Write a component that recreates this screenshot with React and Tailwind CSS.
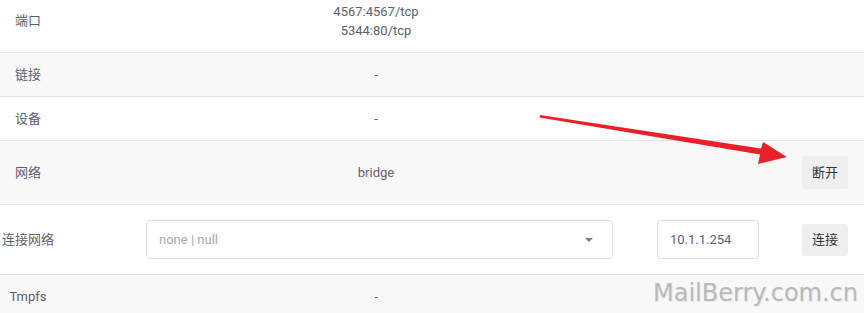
import React from 'react';

const font = { fontFamily: 'Roboto, "Noto Sans CJK SC", sans-serif' };

const Row = ({ label, children, action, bg, className = '' }) => (
  <div className={`flex items-center border-b border-[#e2e2e2] ${bg ? 'bg-[#f8f8f8]' : 'bg-white'} ${className}`}>
    <div className="w-[56px] shrink-0 text-center">{label}</div>
    <div className="w-[640px] shrink-0 text-center">{children}</div>
    <div className="flex-1 flex justify-end pr-4">{action}</div>
  </div>
);

const Btn = ({ children, h = 'h-[33px]' }) => (
  <button className={`w-[46px] ${h} rounded-[3px] bg-[#efefef] text-[13px] text-[#333]`}>{children}</button>
);

export default function App() {
  return (
    <div className="relative w-[864px] h-[313px] overflow-hidden bg-white text-[13px] text-[#5b6170]" style={font}>
      <div className="-mt-[11px]">
        <Row label="端口" className="h-[64px]">
          <div className="leading-[19px]">4567:4567/tcp</div>
          <div className="leading-[19px]">5344:80/tcp</div>
        </Row>
        <Row label="链接" bg className="h-[44px]">-</Row>
        <Row label="设备" className="h-[44px]">-</Row>
        <Row label="网络" bg className="h-[64px]" action={<Btn>断开</Btn>}>bridge</Row>
        <div className="flex items-center h-[70px] border-b border-[#e2e2e2] bg-white">
          <div className="w-[56px] shrink-0 text-center">连接网络</div>
          <div className="ml-[90px] w-[467px] h-[39px] rounded-[4px] border border-[#dcdfe6] flex items-center justify-between pl-3 pr-[19px]">
            <span className="text-[#a3abb8]">none | null</span>
            <svg width="8" height="4" viewBox="0 0 8 4"><path d="M0 0h8L4 4z" fill="#7b7b7b" /></svg>
          </div>
          <div className="ml-[44px] w-[102px] h-[39px] rounded-[4px] border border-[#dcdfe6] flex items-center pl-3 text-[#5b6170]">10.1.1.254</div>
          <div className="flex-1 flex justify-end pr-4"><Btn h="h-[32px]">连接</Btn></div>
        </div>
        <Row label="Tmpfs" bg className="h-[44px]">-</Row>
      </div>

      <svg className="absolute left-0 top-0 pointer-events-none" width="864" height="313">
        <polygon points="540,115 761,148.5 763,142 787,157 758,164 760,154.5 539.5,117.5" fill="#e8202a" />
      </svg>

      <div
        className="absolute right-[6px] top-[278px] text-[24px] leading-[30px] text-[#b9b9b9]"
        style={{ fontFamily: '"DejaVu Sans", sans-serif', textShadow: '1px 1px 1px #e6e6e6' }}
      >
        MailBerry.com.cn
      </div>
    </div>
  );
}
